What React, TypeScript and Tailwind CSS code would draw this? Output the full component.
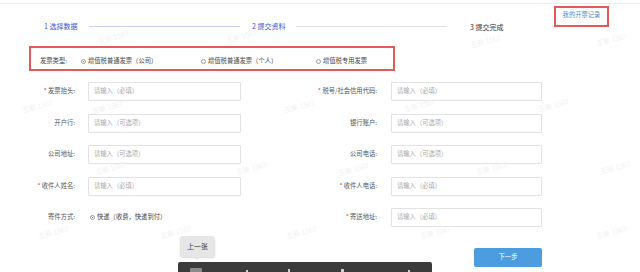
import React from "react";

const Radio = ({ checked }: { checked?: boolean }) => (
  <span className="relative inline-block h-[5px] w-[5px] shrink-0 rounded-full border border-[#9a9a9a] bg-white">
    {checked && <span className="absolute left-[1px] top-[1px] h-[1px] w-[1px] rounded-full bg-[#444]" />}
  </span>
);

const Label = ({ label, req, w }: { label: string; req?: boolean; w: string }) => (
  <span className={`${w} shrink-0 text-right text-[#555]`}>
    {req && <span className="text-[#e04040]">* </span>}
    {label}
  </span>
);

const Input = ({ ph, w, ml }: { ph: string; w: string; ml: string }) => (
  <div className={`${ml} ${w} flex h-[19px] shrink-0 items-center rounded-[1px] border border-[#e2e2e2] bg-white pl-[5px] text-[#a8a8a8]`}>
    {ph}
  </div>
);

const rows: { l: string; lr?: boolean; lp?: string; r: string; rr?: boolean; rp: string }[] = [
  { l: "发票抬头:", lr: true, lp: "请输入（必填）", r: "税号/社会信用代码:", rr: true, rp: "请输入（必填）" },
  { l: "开户行:", lp: "请输入（可选项）", r: "银行账户:", rp: "请输入（可选项）" },
  { l: "公司地址:", lp: "请输入（可选项）", r: "公司电话:", rp: "请输入（可选项）" },
  { l: "收件人姓名:", lr: true, lp: "请输入（必填）", r: "收件人电话:", rr: true, rp: "请输入（必填）" },
  { l: "寄件方式:", r: "寄送地址:", rr: true, rp: "请输入（必填）" },
];

const marks: [number, number][] = [
  [98, 34], [226, 33], [470, 38], [596, 36],
  [22, 103], [92, 104], [284, 103], [404, 102], [538, 102],
  [95, 165], [236, 165], [338, 166], [476, 165], [600, 164],
  [38, 229], [160, 229], [286, 229], [420, 229], [596, 229],
];

export default function App() {
  return (
    <div className="relative h-[272px] w-[640px] overflow-hidden bg-white font-['Noto_Sans_CJK_SC','Noto_Sans',sans-serif] text-[6.3px] leading-none">
      <div className="h-[3px]" />
      <div className="h-px bg-[#ededed]" />

      {/* header */}
      <div className="flex h-[42px] items-start">
        <div className="ml-[44px] mt-[18px] flex h-[9px] items-center">
          <span className="w-[45px] shrink-0 text-[7px] text-[#3c52d6]">1 选择数据</span>
          <span className="h-px w-[151px] shrink-0 bg-[#c9d0f0]" />
          <span className="ml-[12px] w-[44px] shrink-0 text-[7px] text-[#3c52d6]">2 提交资料</span>
          <span className="h-px w-[151px] shrink-0 bg-[#e2e2e2]" />
          <span className="ml-[23px] mt-[2px] w-[37px] shrink-0 text-[7px] text-[#333]">3 提交完成</span>
        </div>
        <div className="ml-[47px] mt-[2px] flex h-[21px] w-[55px] items-center justify-center border-2 border-[#e25a5a] pb-[3px] text-[#4a8fd4]">
          我的开票记录
        </div>
      </div>

      {/* invoice type */}
      <div className="ml-[29px] flex h-[25px] w-[366px] items-center border-2 border-[#e25a5a] pl-[9px] pt-[6px] text-[#444]">
        <span className="w-[41px] shrink-0">发票类型:</span>
        <span className="flex w-[120px] shrink-0 items-center gap-[2px]"><Radio checked />增值税普通发票（公司）</span>
        <span className="flex w-[115px] shrink-0 items-center gap-[2px]"><Radio />增值税普通发票（个人）</span>
        <span className="flex items-center gap-[2px]"><Radio />增值税专用发票</span>
      </div>

      {/* form */}
      <div className="mt-[11px] flex flex-col gap-[12.5px]">
        {rows.map((r, i) => (
          <div key={i} className="flex h-[19px] items-center">
            <Label label={r.l} req={r.lr} w="w-[75px]" />
            {r.lp ? (
              <Input ph={r.lp} w="w-[153px]" ml="ml-[13px]" />
            ) : (
              <div className="ml-[15px] flex w-[151px] shrink-0 items-center gap-[2px] text-[#444]">
                <Radio checked />快递（收费，快递到付）
              </div>
            )}
            <Label label={r.r} req={r.rr} w="w-[136px]" />
            <Input ph={r.rp} w="w-[151px]" ml="ml-[14px]" />
          </div>
        ))}
      </div>

      <div className="ml-[474px] mt-[21px] flex h-[19px] w-[68px] items-center justify-center rounded-[2px] bg-[#4b9ddf] text-white">
        下一步
      </div>

      {/* watermarks */}
      {marks.map(([x, y], i) => (
        <span
          key={i}
          className="pointer-events-none absolute -rotate-[15deg] text-[7px] text-[#f1f1f1]"
          style={{ left: x, top: y }}
        >
          王新 1567
        </span>
      ))}

      {/* image viewer overlay */}
      <div className="absolute left-[180px] top-[236px] flex h-[21px] w-[35px] items-center justify-center rounded-[3px] bg-[#e6e6e6] text-[6.8px] text-[#333] shadow-[0_1px_2px_rgba(0,0,0,0.15)]">
        上一张
        <span className="absolute left-[14px] top-[21px] h-0 w-0 border-x-[3px] border-t-[3px] border-x-transparent border-t-[#e6e6e6]" />
      </div>
      <div className="absolute left-[178px] top-[262px] flex h-[14px] w-[254px] items-start rounded-t-[2px] bg-[#3b3b3b]">
        <span className="ml-[12px] mt-[6px] h-[6px] w-[12px] rounded-[1px] bg-[#8a8a8a]" />
        <span className="ml-[44px] mt-[8px] h-[3px] w-[2px] bg-[#cfcfcf]" />
        <span className="ml-[40px] mt-[7px] h-[4px] w-[2px] bg-[#cfcfcf]" />
        <span className="ml-[51px] mt-[7px] h-[4px] w-[3px] bg-[#cfcfcf]" />
        <span className="ml-[64px] mt-[8px] h-[3px] w-[2px] bg-[#cfcfcf]" />
      </div>
    </div>
  );
}
